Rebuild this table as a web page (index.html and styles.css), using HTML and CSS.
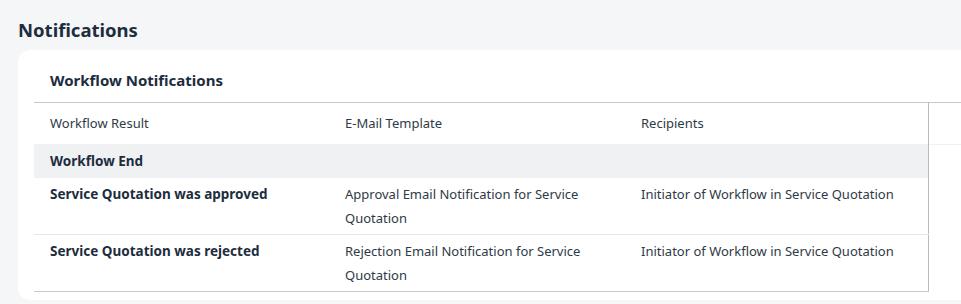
FILE: index.html
```html
<!doctype html>
<html>
<head>
    <meta charset="utf-8"/>
    <title>Notifications</title>
    <link rel="stylesheet" href="styles.css">
</head>
<body>
    <div class="page">
        <h1 class="page-title">Notifications</h1>

        <div class="card">
            <h2 class="card-title">Workflow Notifications</h2>

            <table class="grid">
                <colgroup>
                    <col class="col-result">
                    <col class="col-template">
                    <col class="col-recipients">
                    <col>
                </colgroup>
                <thead>
                    <tr>
                        <th>Workflow Result</th>
                        <th>E-Mail Template</th>
                        <th class="last">Recipients</th>
                        <th class="filler"></th>
                    </tr>
                </thead>
                <tbody>
                    <tr class="group">
                        <td colspan="3" class="last">Workflow End</td>
                        <td class="filler"></td>
                    </tr>
                    <tr>
                        <td class="strong">Service Quotation was approved</td>
                        <td>Approval Email Notification for Service Quotation</td>
                        <td class="last">Initiator of Workflow in Service Quotation</td>
                        <td class="filler"></td>
                    </tr>
                    <tr class="end">
                        <td class="strong">Service Quotation was rejected</td>
                        <td>Rejection Email Notification for Service Quotation</td>
                        <td class="last">Initiator of Workflow in Service Quotation</td>
                        <td class="filler"></td>
                    </tr>
                </tbody>
            </table>
        </div>
    </div>
</body>
</html>
```

FILE: styles.css
```css
html {
    font-family:"Noto Sans","Open Sans",Arial,sans-serif;
    background-color:#f5f6f7;
}
body {
    margin:0;
    overflow:hidden;
    color:#1d2d3e;
}

* {
    box-sizing:border-box;
}

.page {
    padding:16px 0 0 18px;
}

.page-title {
    margin:0 0 6px 0;
    font-size:18.5px;
    line-height:28px;
    font-weight:700;
}

/* card runs past the right edge of the window */
.card {
    width:calc(100% + 40px);
    background-color:#ffffff;
    border-radius:12px;
    padding:18px 0 8px 16px;
}
.card-title {
    margin:0 0 10px 16px;
    font-size:15px;
    line-height:24px;
    font-weight:700;
}

.grid {
    width:100%;
    border-collapse:collapse;
    table-layout:fixed;
    font-size:13px;
    line-height:24px;
}
.col-result { width:295px; }
.col-template { width:296px; }
.col-recipients { width:303px; }

.grid th, .grid td {
    text-align:left;
    vertical-align:top;
    padding:4px 16px;
    color:#2e3a46;
}
.grid th {
    font-weight:400;
    border-top:1px solid #c4c8cc;
    padding:8px 16px 9px;
}
.grid td {
    border-bottom:1px solid #e5e6e8;
}
.grid .last {
    border-right:1px solid #b8bcc0;
}

.grid .group td {
    font-weight:700;
    font-size:13.5px;
    color:#1d2d3e;
    background-color:#eff1f2;
    border-bottom:none;
    padding:5px 16px 5px;
}
.grid .group td.filler {
    background-color:#ffffff;
    border-top:1px solid #eef0f2;
}

.grid .strong {
    font-weight:700;
    font-size:13.5px;
    color:#1d2d3e;
}

.grid .end td {
    border-bottom:1px solid #c8cbce;
}
.grid .end td.filler,
.grid td.filler {
    border-bottom:none;
}
```
